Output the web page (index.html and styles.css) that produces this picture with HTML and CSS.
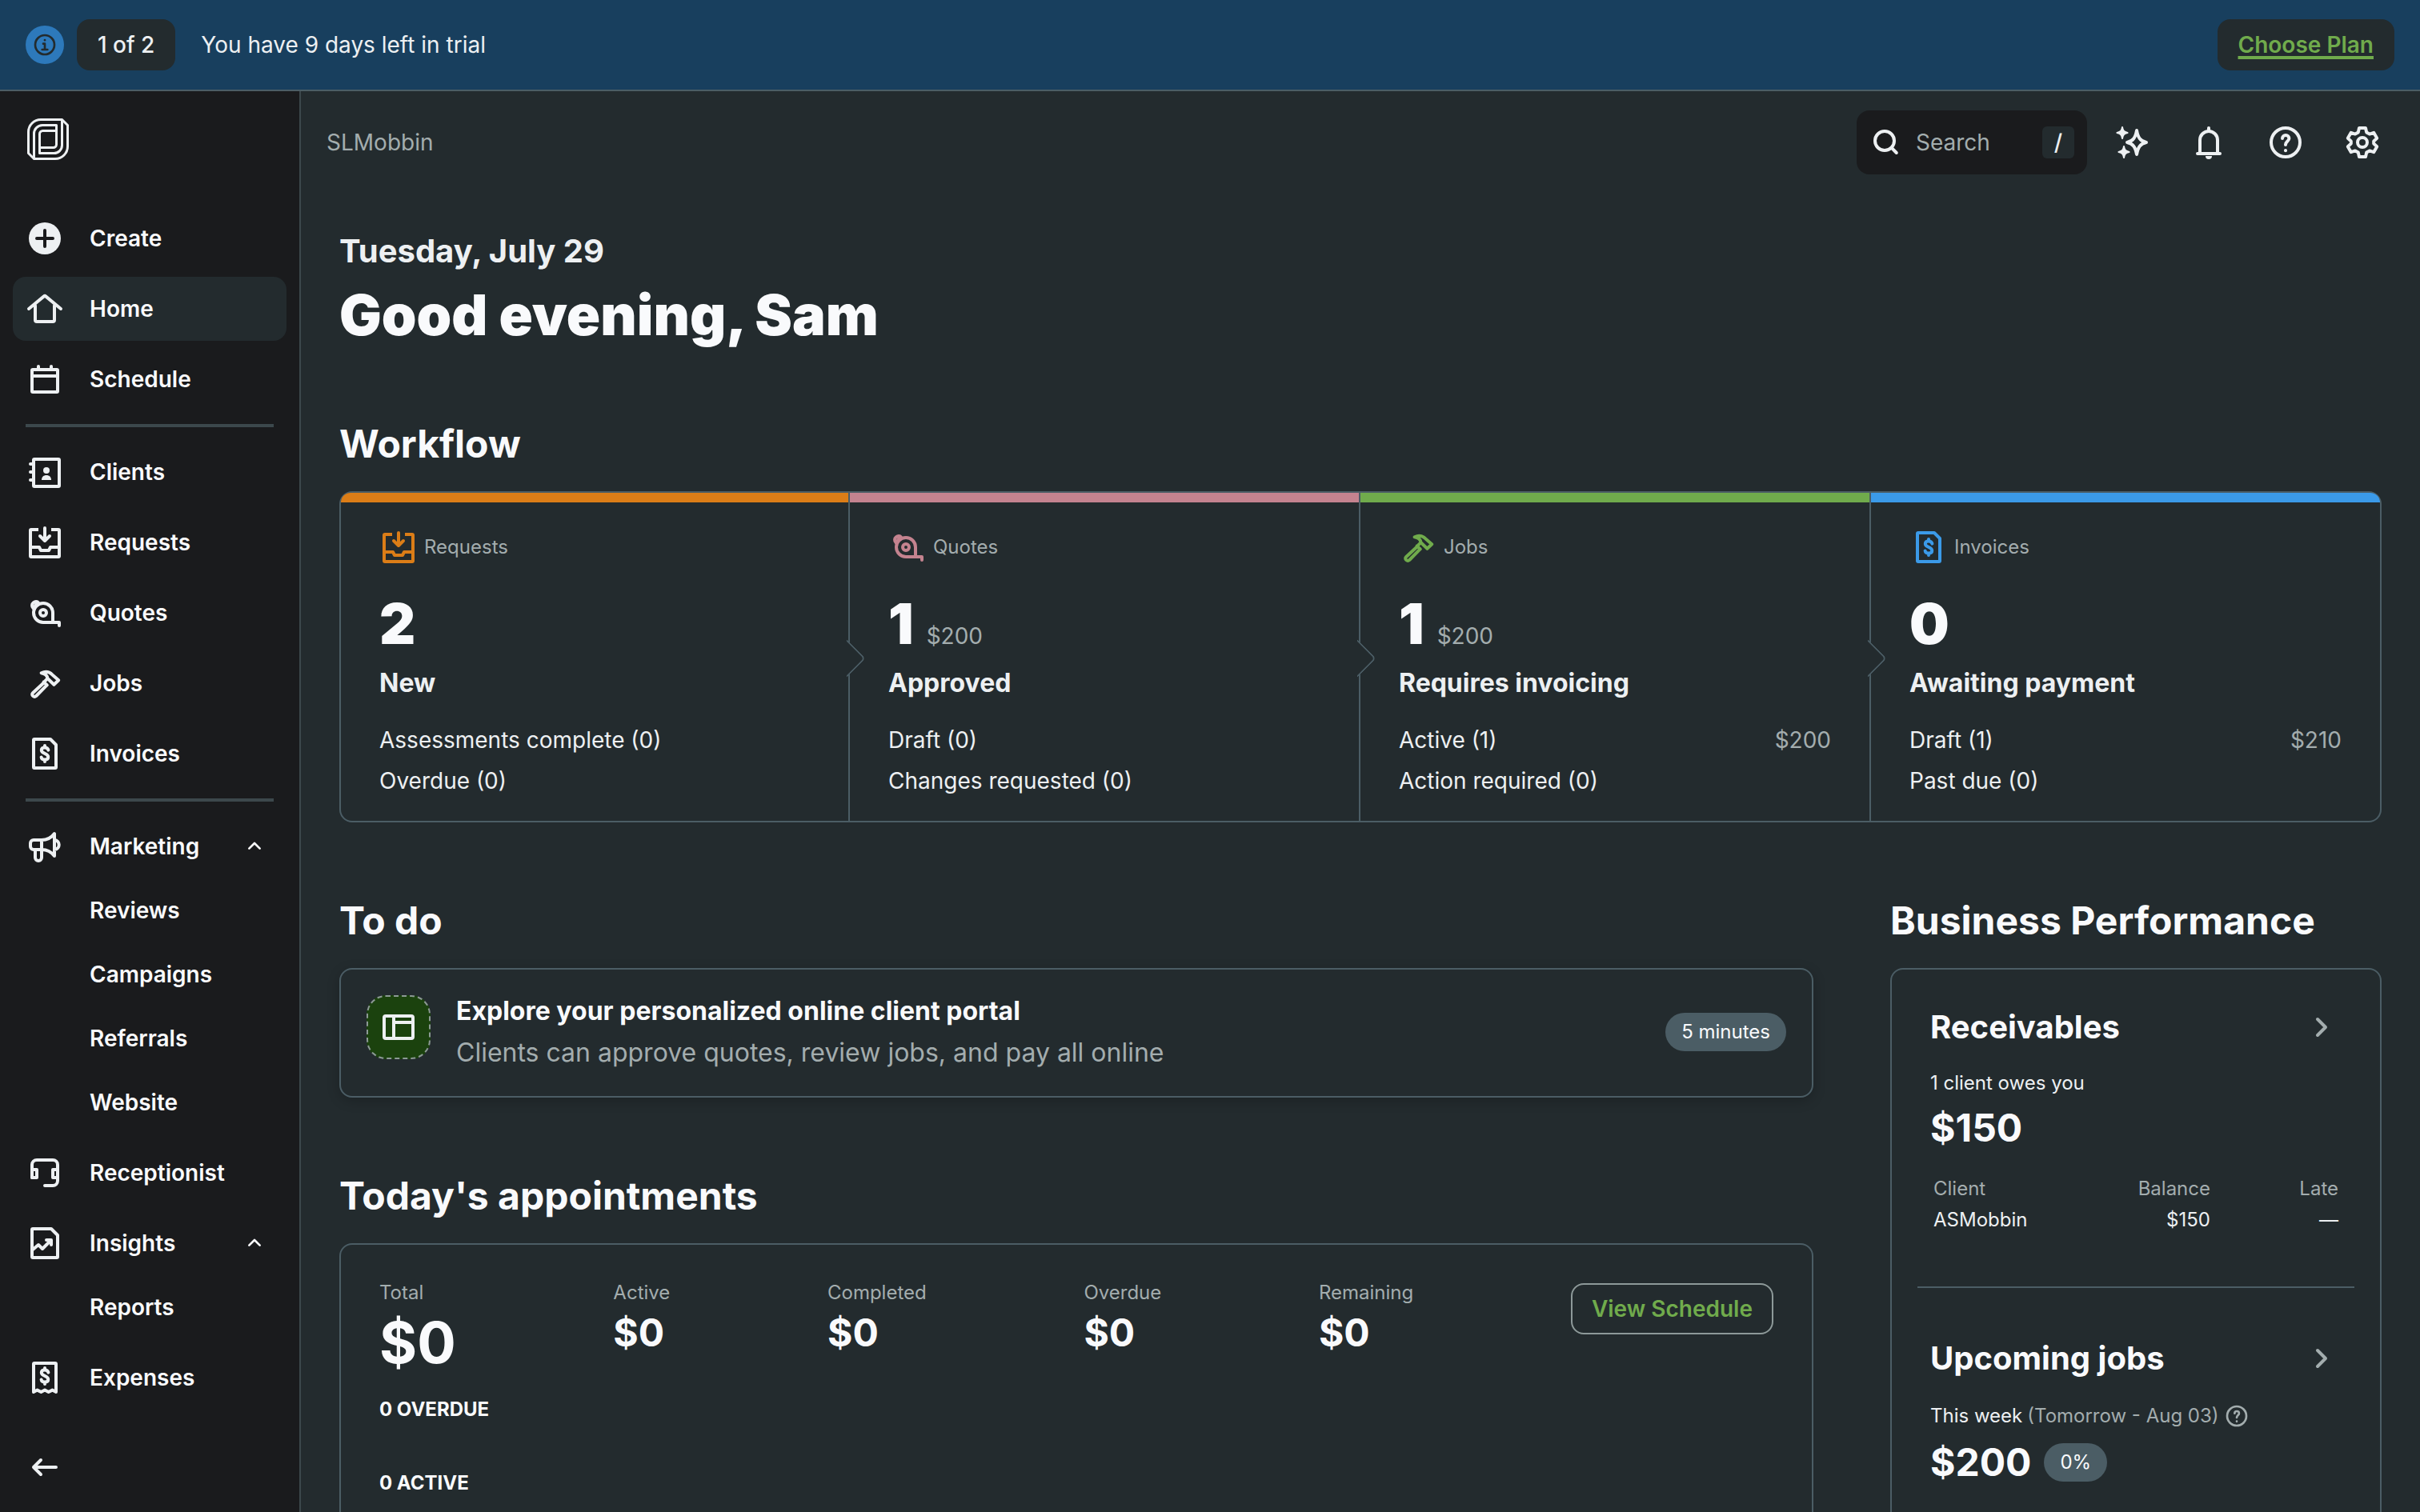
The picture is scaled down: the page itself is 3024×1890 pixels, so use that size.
FILE: index.html
```html
<!DOCTYPE html>
<html lang="en">
<head>
    <meta charset="UTF-8">
    <meta name="viewport" content="width=device-width, initial-scale=1.0">
    <title>Home</title>
    <link rel="stylesheet" href="styles.css">
</head>
<body>
    <!-- Icon set, 24 unit grid -->
    <svg class="sprite" aria-hidden="true">
        <symbol id="i-info" viewBox="0 0 24 24"><circle cx="12" cy="12" r="9"/><path d="M10.500 11H12v5M9.500 16.500h5"/><path d="M12 7.500v.1"/></symbol>
        <symbol id="i-home" viewBox="0 0 24 24"><path d="M2 12l9.300-7.700a1 1 0 0 1 1.400 0L22 12"/><path d="M6 10v9a1 1 0 0 0 1 1h10a1 1 0 0 0 1-1v-9"/></symbol>
        <symbol id="i-calendar" viewBox="0 0 24 24"><rect x="4" y="6" width="16" height="14" rx=".5"/><path d="M4 10h16M8 4v1M16 4v1"/></symbol>
        <symbol id="i-clients" viewBox="0 0 24 24"><rect x="5" y="4" width="16" height="17" rx=".5"/><path d="M3 7h2M3 12h2M3 17h2"/><g fill="currentColor" stroke="none"><circle cx="13" cy="11" r="2"/><path d="M10 17c0-2 1.300-3 3-3s3 1 3 3z"/></g></symbol>
        <symbol id="i-inbox" viewBox="0 0 24 24"><path stroke-linecap="butt" d="M8 4H3.500a.5.5 0 0 0-.5.500v16a.5.5 0 0 0 .5.500h17a.5.5 0 0 0 .5-.5v-16a.5.5 0 0 0-.5-.5H16"/><path d="M3 15h5.500l1 2h5l1-2H21"/><path d="M12 3v7.500M9 8l3 3 3-3"/></symbol>
        <symbol id="i-tape" viewBox="0 0 24 24"><path d="M21 20v-2H11a6 6 0 1 1 6-6v6"/><circle cx="11" cy="12" r="2"/><path d="M4.800 9.200C3.600 8 3.900 6.500 4.900 5.700s2.300-1 3.100 0M6 7.600l1-1"/></symbol>
        <symbol id="i-hammer" viewBox="0 0 24 24"><path d="M9.800 5.600c2.400-1.100 5-.8 6.900 1.100l3.900 3.400-2.900 2.800-4-3.900c-.1-1.500-1.500-2.900-3.900-3.400z"/><path d="M11.600 11.500l-7 6.500c-.8.8-.6 1.500 0 2s1.400.5 2 0l6.700-6.800"/><path d="M11.300 11.200l2 2M13.600 9.200l-2 2"/></symbol>
        <symbol id="i-invoice" viewBox="0 0 24 24"><path d="M5 3.500V20.500a.5.5 0 0 0 .5.500h13a.5.5 0 0 0 .5-.5V6.500L15.500 3h-10a.5.5 0 0 0-.5.500z"/><path d="M14.200 9.800c-.2-1-1-1.600-2.200-1.600s-2.100.6-2.100 1.700c0 2.500 4.200 1.600 4.200 4.200 0 1.100-.9 1.700-2.100 1.700s-2.100-.6-2.200-1.600M12 7v1M12 16v1"/></symbol>
        <symbol id="i-megaphone" viewBox="0 0 24 24"><path d="M10 8H5a2 2 0 0 0-2 2v2a2 2 0 0 0 2 2h5zM10 8c3.500 0 6-1.300 8-4v14c-2-2.700-4.500-4-8-4M18 8c3.800.3 3.800 5.800 0 6M6 14v5a2 2 0 0 0 4 0v-5"/></symbol>
        <symbol id="i-headset" viewBox="0 0 24 24"><path d="M4 15V7a3 3 0 0 1 3-3h10a3 3 0 0 1 3 3v10a3 3 0 0 1-3 3h-5"/><path d="M4 10h3v5H4zM20 10h-3v5h3z"/></symbol>
        <symbol id="i-insights" viewBox="0 0 24 24"><path d="M4 3.500V20.500a.5.5 0 0 0 .5.500h15a.5.5 0 0 0 .5-.5V7l-4-4H4.500a.5.5 0 0 0-.5.500z"/><path d="M4.500 16L8 13l2.500 2.500L16 10M13 10h3v3"/></symbol>
        <symbol id="i-receipt" viewBox="0 0 24 24"><path d="M5 21V3.500a.5.5 0 0 1 .5-.5h13a.5.5 0 0 1 .5.500V21l-2.300-1.200L14.300 21 12 19.800 9.700 21l-2.400-1.200z"/><path d="M14.200 8.800c-.2-1-1-1.600-2.200-1.600s-2.100.6-2.100 1.700c0 2.500 4.200 1.600 4.200 4.200 0 1.100-.9 1.700-2.100 1.700s-2.100-.6-2.200-1.600M12 6v1M12 15v1"/></symbol>
        <symbol id="i-back" viewBox="0 0 24 24"><path d="M19 12H5M9.500 7.500L5 12l4.500 4.500"/></symbol>
        <symbol id="i-up" viewBox="0 0 24 24"><path d="M7 14l5-5 5 5"/></symbol>
        <symbol id="i-right" viewBox="0 0 24 24"><path d="M9 7l5 5-5 5"/></symbol>
        <symbol id="i-search" viewBox="0 0 24 24"><circle cx="10.500" cy="11" r="6"/><path d="M14.900 15.400l3 3.100"/></symbol>
        <symbol id="i-sparkles" viewBox="0 0 24 24"><path d="M15 4.500c.8 4.500 2.200 6.700 6 7.500-3.800.8-5.200 3-6 7.500-.8-4.500-2.200-6.700-6-7.500 3.800-.8 5.200-3 6-7.500z"/><path fill="currentColor" stroke-width="1" d="M6 2.500c.3 2.200 1 3 3.300 3.500C7 6.500 6.300 7.300 6 9.500 5.700 7.300 5 6.500 2.700 6 5 5.500 5.700 4.700 6 2.500zM7 14.500c.3 2.200 1 3 3.300 3.500-2.300.5-3 1.300-3.300 3.500-.3-2.200-1-3-3.300-3.500 2.300-.5 3-1.300 3.300-3.500z"/></symbol>
        <symbol id="i-bell" viewBox="0 0 24 24"><path d="M12 3v2M6.500 18.500v-8a5.500 5.500 0 0 1 11 0v8"/><path d="M5 19h14"/><path fill="currentColor" stroke="none" d="M10 20.500h4a2 2 0 0 1-4 0z"/></symbol>
        <symbol id="i-help" viewBox="0 0 24 24"><circle cx="12" cy="12" r="9"/><path d="M10 9.500c0-1.200.9-2 2.100-2s2.100.8 2.100 2c0 1.700-2.200 1.900-2.200 4"/><path d="M12 17v.1"/></symbol>
        <symbol id="i-gear" viewBox="0 0 24 24"><circle cx="12" cy="12" r="3"/><path d="M10 3h4l.6 2.700 1.900 1.100 2.600-.9 2 3.500-2 1.800v1.600l2 1.800-2 3.500-2.600-.9-1.900 1.100L14 21h-4l-.6-2.700-1.900-1.100-2.600.9-2-3.500 2-1.800v-1.600l-2-1.800 2-3.500 2.600.9 1.900-1.100z"/></symbol>
        <symbol id="i-layout" viewBox="0 0 24 24"><rect x="3" y="5" width="18" height="14" rx="1"/><path d="M9 5v14M9 9h12"/></symbol>
    </svg>

    <div class="banner">
        <span class="banner-icon"><svg class="icon"><use href="#i-info"/></svg></span>
        <span class="banner-count">1 of 2</span>
        <span class="banner-text">You have 9 days left in trial</span>
        <a href="#" class="choose-plan">Choose Plan</a>
    </div>

    <div class="app">
        <aside class="sidebar">
            <a href="#" class="logo" aria-label="Dashboard">
                <svg viewBox="-2 -2 56 56">
                    <path d="M8.500 50.500L1.500 43.500V17A15.500 15.500 0 0 1 17 1.500h26.500l7 7V35A15.500 15.500 0 0 1 35 50.500z"/>
                    <path d="M8.500 50V19a10.500 10.500 0 0 1 10.500-10.500h17.500v24a4 4 0 0 1-4 4H16"/>
                    <path d="M43.500 2v31.500a10 10 0 0 1-10 10H15.500v-24a4 4 0 0 1 4-4h17"/>
                </svg>
            </a>
            <nav class="nav">
                <button type="button" class="nav-item">
                    <svg class="icon"><circle cx="24" cy="24" r="20" fill="currentColor" stroke="none"/><path class="plus" d="M24 14v20M14 24h20"/></svg>
                    Create
                </button>
                <a href="#" class="nav-item active"><svg class="icon"><use href="#i-home"/></svg>Home</a>
                <a href="#" class="nav-item"><svg class="icon"><use href="#i-calendar"/></svg>Schedule</a>
                <hr>
                <a href="#" class="nav-item"><svg class="icon"><use href="#i-clients"/></svg>Clients</a>
                <a href="#" class="nav-item"><svg class="icon"><use href="#i-inbox"/></svg>Requests</a>
                <a href="#" class="nav-item"><svg class="icon"><use href="#i-tape"/></svg>Quotes</a>
                <a href="#" class="nav-item"><svg class="icon"><use href="#i-hammer"/></svg>Jobs</a>
                <a href="#" class="nav-item"><svg class="icon"><use href="#i-invoice"/></svg>Invoices</a>
                <hr>
                <div class="nav-group">
                    <button type="button" class="nav-item"><svg class="icon"><use href="#i-megaphone"/></svg>Marketing<svg class="caret"><use href="#i-up"/></svg></button>
                    <a href="#" class="nav-item sub">Reviews</a>
                    <a href="#" class="nav-item sub">Campaigns</a>
                    <a href="#" class="nav-item sub">Referrals</a>
                    <a href="#" class="nav-item sub">Website</a>
                </div>
                <a href="#" class="nav-item"><svg class="icon"><use href="#i-headset"/></svg>Receptionist</a>
                <div class="nav-group">
                    <button type="button" class="nav-item"><svg class="icon"><use href="#i-insights"/></svg>Insights<svg class="caret"><use href="#i-up"/></svg></button>
                    <a href="#" class="nav-item sub">Reports</a>
                </div>
                <a href="#" class="nav-item"><svg class="icon"><use href="#i-receipt"/></svg>Expenses</a>
            </nav>
            <button type="button" class="nav-item collapse" aria-label="Collapse menu"><svg class="icon"><use href="#i-back"/></svg></button>
        </aside>

        <main class="main">
            <header class="topbar">
                <span class="company">SLMobbin</span>
                <label class="search">
                    <svg class="icon"><use href="#i-search"/></svg>
                    <input type="text" placeholder="Search" aria-label="Search">
                    <kbd>/</kbd>
                </label>
                <button type="button" class="icon-btn" aria-label="Assistant"><svg class="icon"><use href="#i-sparkles"/></svg></button>
                <button type="button" class="icon-btn" aria-label="Notifications"><svg class="icon"><use href="#i-bell"/></svg></button>
                <button type="button" class="icon-btn" aria-label="Help"><svg class="icon"><use href="#i-help"/></svg></button>
                <button type="button" class="icon-btn" aria-label="Settings"><svg class="icon"><use href="#i-gear"/></svg></button>
            </header>

            <div class="content">
                <p class="date">Tuesday, July 29</p>
                <h1>Good evening, Sam</h1>

                <section class="block">
                    <h2>Workflow</h2>
                    <div class="workflow">
                        <article class="stage requests">
                            <div class="stage-head"><svg class="icon"><use href="#i-inbox"/></svg>Requests</div>
                            <div class="stage-count">2</div>
                            <h3>New</h3>
                            <ul>
                                <li>Assessments complete (0)</li>
                                <li>Overdue (0)</li>
                            </ul>
                        </article>
                        <article class="stage quotes">
                            <div class="stage-head"><svg class="icon"><use href="#i-tape"/></svg>Quotes</div>
                            <div class="stage-count">1 <span class="amount">$200</span></div>
                            <h3>Approved</h3>
                            <ul>
                                <li>Draft (0)</li>
                                <li>Changes requested (0)</li>
                            </ul>
                        </article>
                        <article class="stage jobs">
                            <div class="stage-head"><svg class="icon"><use href="#i-hammer"/></svg>Jobs</div>
                            <div class="stage-count">1 <span class="amount">$200</span></div>
                            <h3>Requires invoicing</h3>
                            <ul>
                                <li>Active (1) <span class="amount">$200</span></li>
                                <li>Action required (0)</li>
                            </ul>
                        </article>
                        <article class="stage invoices">
                            <div class="stage-head"><svg class="icon"><use href="#i-invoice"/></svg>Invoices</div>
                            <div class="stage-count">0</div>
                            <h3>Awaiting payment</h3>
                            <ul>
                                <li>Draft (1) <span class="amount">$210</span></li>
                                <li>Past due (0)</li>
                            </ul>
                        </article>
                    </div>
                </section>

                <div class="columns">
                    <div class="column">
                        <section class="block">
                            <h2>To do</h2>
                            <a href="#" class="card todo">
                                <span class="todo-icon"><svg class="icon"><use href="#i-layout"/></svg></span>
                                <span class="todo-text">
                                    <strong>Explore your personalized online client portal</strong>
                                    <span>Clients can approve quotes, review jobs, and pay all online</span>
                                </span>
                                <span class="badge">5 minutes</span>
                            </a>
                        </section>

                        <section class="block">
                            <h2>Today's appointments</h2>
                            <div class="card appointments">
                                <div class="stats">
                                    <div class="stat total"><span>Total</span><b>$0</b></div>
                                    <div class="stat"><span>Active</span><b>$0</b></div>
                                    <div class="stat"><span>Completed</span><b>$0</b></div>
                                    <div class="stat"><span>Overdue</span><b>$0</b></div>
                                    <div class="stat"><span>Remaining</span><b>$0</b></div>
                                    <button type="button" class="view-schedule">View Schedule</button>
                                </div>
                                <h4>0 OVERDUE</h4>
                                <h4>0 ACTIVE</h4>
                            </div>
                        </section>
                    </div>

                    <section class="block">
                        <h2>Business Performance</h2>
                        <div class="card performance">
                            <div class="metric">
                                <a href="#" class="metric-title">Receivables<svg class="icon"><use href="#i-right"/></svg></a>
                                <p>1 client owes you</p>
                                <div class="metric-value">$150</div>
                                <table>
                                    <thead>
                                        <tr><th>Client</th><th>Balance</th><th>Late</th></tr>
                                    </thead>
                                    <tbody>
                                        <tr><td>ASMobbin</td><td>$150</td><td>—</td></tr>
                                    </tbody>
                                </table>
                            </div>
                            <div class="metric">
                                <a href="#" class="metric-title">Upcoming jobs<svg class="icon"><use href="#i-right"/></svg></a>
                                <p>This week <span class="muted">(Tomorrow - Aug 03)</span><svg class="help"><use href="#i-help"/></svg></p>
                                <div class="metric-value">$200 <span class="badge">0%</span></div>
                            </div>
                        </div>
                    </section>
                </div>
            </div>
        </main>
    </div>
</body>
</html>
```
FILE: styles.css
```css
:root {
    --bg: #232b2e;
    --dark: #1a1b1d;
    --border: #4b5d65;
    --border-dark: #3c484c;
    --white: #f9fafc;
    --text: #edf0f2;
    --muted: #a3adae;
    --green: #70ab4c;
}

* {
    margin: 0;
    padding: 0;
    box-sizing: border-box;
}

body {
    height: 100vh;
    display: flex;
    flex-direction: column;
    overflow: hidden;
    background: var(--bg);
    color: var(--text);
    font-family: Inter, "Liberation Sans", sans-serif;
    font-size: 28px;
}

a {
    color: inherit;
    text-decoration: none;
}

button,
input {
    font: inherit;
    color: inherit;
    background: none;
    border: none;
}

button {
    cursor: pointer;
}

ul {
    list-style: none;
}

svg {
    display: block;
    flex: none;
    fill: none;
    stroke: currentColor;
    stroke-width: 2;
    stroke-linecap: round;
    stroke-linejoin: round;
}

.sprite {
    position: absolute;
    width: 0;
    height: 0;
}

.icon {
    width: 48px;
    height: 48px;
}

/* Trial banner */
.banner {
    display: flex;
    align-items: center;
    height: 114px;
    flex: none;
    padding: 0 32px;
    background: #183f5e;
    border-bottom: 2px solid var(--border);
}

.banner-icon {
    display: flex;
    align-items: center;
    justify-content: center;
    width: 48px;
    height: 48px;
    border-radius: 50%;
    background: #2d79bb;
    color: var(--bg);
}

.banner-icon .icon {
    width: 32px;
    height: 32px;
}

.banner-count {
    margin: 0 32px 0 16px;
    padding: 0 26px;
    line-height: 64px;
    border-radius: 16px;
    background: var(--bg);
    font-weight: 500;
}

.choose-plan {
    margin-left: auto;
    padding: 0 26px;
    line-height: 64px;
    border-radius: 16px;
    background: var(--bg);
    color: var(--green);
    font-weight: 600;
    text-decoration: underline;
    text-decoration-thickness: 4px;
    text-underline-offset: 4px;
}

.app {
    flex: 1;
    min-height: 0;
    display: flex;
}

/* Sidebar */
.sidebar {
    display: flex;
    flex-direction: column;
    flex: none;
    width: 376px;
    padding: 32px 16px 16px;
    background: var(--dark);
    border-right: 2px solid var(--border-dark);
}

.logo svg {
    width: 56px;
    height: 56px;
    margin: 0 0 56px 16px;
    stroke-width: 3;
}

.nav {
    display: flex;
    flex-direction: column;
    gap: 8px;
}

.nav hr {
    height: 4px;
    margin: 8px 16px;
    border: none;
    background: var(--border-dark);
}

.nav-item {
    display: flex;
    align-items: center;
    gap: 32px;
    width: 100%;
    height: 80px;
    padding: 0 16px;
    border-radius: 16px;
    color: var(--white);
    font-weight: 600;
}

.nav-item.active {
    background: var(--bg);
}

.nav-item.sub {
    padding-left: 96px;
}

.nav-item .icon {
    color: var(--text);
}

.plus {
    stroke: var(--dark);
    stroke-width: 4;
}

.caret {
    width: 32px;
    height: 32px;
    margin: 0 8px 0 auto;
}

.collapse {
    margin-top: auto;
}

/* Top bar */
.main {
    flex: 1;
    min-width: 0;
    overflow: hidden;
}

.topbar {
    display: flex;
    align-items: center;
    gap: 16px;
    padding: 24px 32px;
}

.company {
    margin-right: auto;
    color: var(--muted);
}

.search {
    display: flex;
    align-items: center;
    width: 288px;
    height: 80px;
    padding: 0 16px 0 14px;
    border-radius: 16px;
    background: var(--dark);
}

.search .icon {
    margin-right: 12px;
}

.search input {
    flex: 1;
    min-width: 0;
    outline: none;
}

.search input::placeholder {
    color: var(--muted);
    opacity: 1;
}

kbd {
    width: 40px;
    height: 40px;
    border-radius: 6px;
    background: var(--bg);
    font: 500 28px/40px Inter, sans-serif;
    text-align: center;
}

.icon-btn {
    display: flex;
    align-items: center;
    justify-content: center;
    width: 80px;
    height: 80px;
}

/* Page content */
.content {
    padding: 48px;
}

.date {
    font-size: 40px;
    font-weight: 700;
    line-height: 48px;
}

h1 {
    margin: 16px 0 94px;
    color: var(--white);
    font-size: 70px;
    font-weight: 900;
    line-height: 80px;
}

h2 {
    margin-bottom: 32px;
    color: var(--white);
    font-size: 48px;
    font-weight: 700;
    line-height: 54px;
}

.block {
    margin-bottom: 96px;
}

.workflow {
    display: grid;
    grid-template-columns: repeat(4, 1fr);
}

.stage {
    position: relative;
    padding: 0 48px 24px;
    border: 2px solid var(--border);
    border-left: none;
}

.stage:first-child {
    border-left: 2px solid var(--border);
    border-radius: 16px 0 0 16px;
}

.stage:last-child {
    border-radius: 0 16px 16px 0;
}

/* coloured strip */
.stage::before {
    content: '';
    display: block;
    height: 12px;
    margin: 0 -48px 32px;
    background: var(--stage);
}

.stage:first-child::before {
    border-top-left-radius: 14px;
}

.stage:last-child::before {
    border-top-right-radius: 14px;
}

/* notch pointing to the next stage */
.stage:not(:last-child)::after {
    content: '';
    position: absolute;
    z-index: 1;
    top: 50%;
    right: -15px;
    width: 30px;
    height: 30px;
    margin-top: -15px;
    border: 2px solid var(--border);
    border-left-color: transparent;
    border-bottom-color: transparent;
    border-radius: 0 6px 0 0;
    background: var(--bg);
    clip-path: polygon(0 0, 100% 0, 100% 100%);
    transform: rotate(45deg);
}

.requests { --stage: #db7d17; }
.quotes { --stage: #c4838f; }
.jobs { --stage: #70ab4c; }
.invoices { --stage: #3b9ae8; }

.stage-head {
    display: flex;
    align-items: center;
    gap: 8px;
    margin-bottom: 36px;
    color: var(--muted);
    font-size: 24px;
    line-height: 28px;
}

.stage-head .icon {
    color: var(--stage);
}

.stage-count {
    display: flex;
    align-items: baseline;
    gap: 16px;
    height: 72px;
    margin-bottom: 18px;
    color: var(--white);
    font-size: 70px;
    font-weight: 900;
    line-height: 72px;
}

.amount {
    color: var(--muted);
    font-size: 28px;
    font-weight: 400;
}

h3 {
    margin-bottom: 26px;
    font-size: 32px;
    font-weight: 700;
    line-height: 40px;
}

.stage li {
    display: flex;
    justify-content: space-between;
    line-height: 51px;
}

.columns {
    display: grid;
    grid-template-columns: 3fr 1fr;
    gap: 96px;
}

.card {
    border: 2px solid var(--border);
    border-radius: 16px;
}

.badge {
    padding: 0 20px;
    border-radius: 24px;
    background: var(--border);
    color: var(--white);
    font-size: 24px;
    font-weight: 400;
    line-height: 48px;
}

.muted {
    color: var(--muted);
}

/* To do */
.todo {
    display: flex;
    gap: 32px;
    padding: 32px 32px 34px;
    box-shadow: 0 4px 16px rgba(0, 0, 0, 0.2);
}

.todo-icon {
    display: flex;
    align-items: center;
    justify-content: center;
    width: 80px;
    height: 80px;
    border: 2px dashed #8c9a94;
    border-radius: 24px;
    background: #1b420e;
}

.todo-text {
    display: grid;
    gap: 12px;
    font-size: 32px;
    line-height: 40px;
    color: var(--muted);
}

.todo-text strong {
    color: var(--white);
    font-weight: 700;
}

.todo .badge {
    margin-left: auto;
    align-self: center;
}

/* Today's appointments */
.appointments {
    padding: 48px 48px 96px;
}

.stats {
    display: flex;
    justify-content: space-between;
    align-items: flex-start;
    margin-bottom: 26px;
}

.stat {
    display: grid;
    gap: 8px;
    color: var(--muted);
    font-size: 24px;
    line-height: 24px;
}

.stat b {
    color: var(--white);
    font-size: 48px;
    line-height: 60px;
}

.stat.total b {
    font-size: 72px;
    line-height: 84px;
}

.view-schedule {
    height: 64px;
    padding: 0 24px;
    border: 2px solid #8d9999;
    border-radius: 16px;
    color: var(--green);
    font-weight: 600;
}

h4 {
    margin-bottom: 60px;
    color: var(--white);
    font-size: 24px;
    font-weight: 700;
    line-height: 32px;
}

/* Business performance */
.performance {
    padding: 0 32px 96px;
}

.metric {
    padding: 64px 16px;
}

.metric:first-child {
    padding-top: 48px;
    border-bottom: 2px solid var(--border);
}

.metric-title {
    display: flex;
    align-items: center;
    justify-content: space-between;
    margin-bottom: 30px;
    color: var(--white);
    font-size: 40px;
    font-weight: 700;
    line-height: 48px;
}

.metric-title .icon {
    color: var(--muted);
}

.metric p {
    display: flex;
    align-items: center;
    gap: 6px;
    margin-bottom: 10px;
    font-size: 24px;
    line-height: 32px;
}

.help {
    width: 32px;
    height: 32px;
    margin: 2px 0;
    color: var(--muted);
}

.metric-value {
    display: flex;
    align-items: center;
    gap: 16px;
    color: var(--white);
    font-size: 48px;
    font-weight: 700;
    line-height: 60px;
}

table {
    width: 100%;
    margin-top: 26px;
    border-collapse: collapse;
    font-size: 24px;
}

th,
td {
    height: 39px;
    padding: 0 4px;
    text-align: right;
}

th {
    color: var(--muted);
    font-weight: 400;
}

th:first-child,
td:first-child {
    text-align: left;
}

th:last-child,
td:last-child {
    width: 160px;
}
```
